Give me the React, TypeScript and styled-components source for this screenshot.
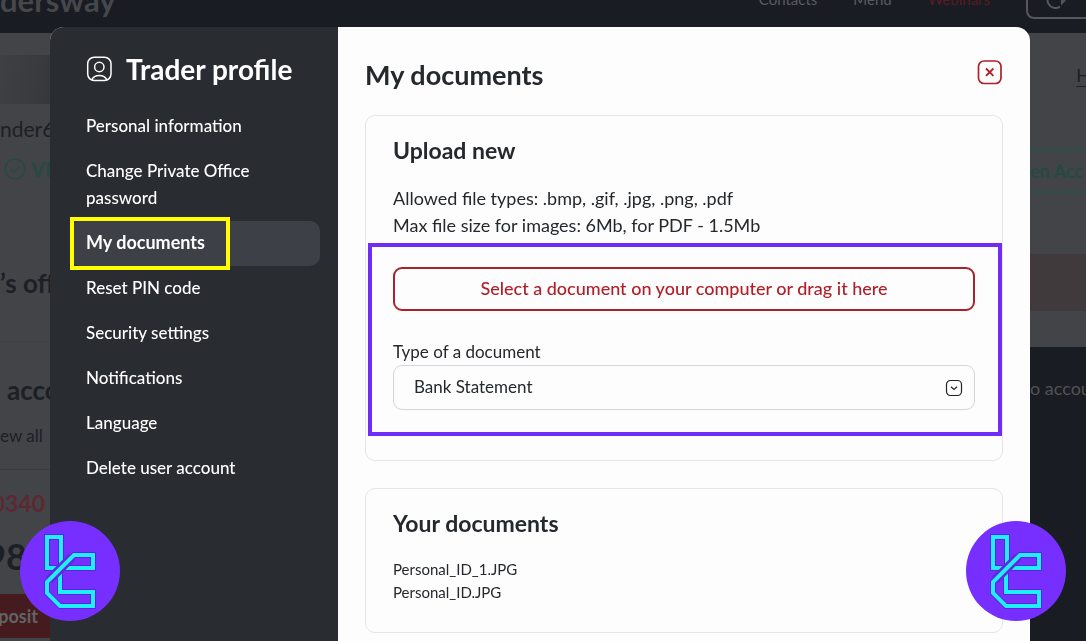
import React from "react";
import styled, { createGlobalStyle, css } from "styled-components";

const GlobalStyle = createGlobalStyle`
  *, *::before, *::after { box-sizing: border-box; }
  body { margin: 0; background: #191c22; overflow: hidden; }
  h1, h2, h3, p, ul { margin: 0; padding: 0; font-weight: 400; }
  ul { list-style: none; }
  body, button, select { font-family: Lato, "Liberation Sans", sans-serif; }
`;

/* Dimmed office page */

const Office = styled.div`
  height: 100vh;
  overflow: hidden;
  display: flex;
  flex-direction: column;
  color: #1c1f25;
  background: #424448;
`;

const TopBar = styled.header`
  flex: none;
  height: 66px;
  margin-top: -33px;
  display: flex;
  align-items: center;
  justify-content: space-between;
  background: #191c22;
`;

const Brand = styled.span`
  font-size: 31px;
  line-height: 36px;
  font-weight: 700;
  color: #45474b;
`;

const TopNav = styled.nav`
  display: flex;
  align-items: center;
  gap: 36px;
`;

const TopLink = styled.a<{ $accent?: boolean }>`
  padding-bottom: 2px;
  font-size: 15px;
  line-height: 20px;
  color: ${(p) => (p.$accent ? "#5a1a26" : "#5a5c60")};
  text-decoration: none;
`;

const SignOut = styled.button`
  width: 100px;
  height: 37px;
  margin-right: -40px;
  padding: 0 18px;
  display: flex;
  align-items: center;
  border: 2px solid #55575b;
  border-radius: 8px;
  color: #55575b;
  background: transparent;
`;

const Columns = styled.div`
  flex: 1;
  display: grid;
  grid-template-columns: 50px 56px;
  justify-content: space-between;
`;

const LeftColumn = styled.div`
  display: flex;
  flex-direction: column;
  white-space: nowrap;
  overflow: hidden;
`;

const Avatar = styled.div`
  flex: none;
  height: 49px;
  margin: 22px 0 12px;
  background: linear-gradient(100deg, #3e4044, #36383c);
`;

const UserName = styled.p`
  font-size: 21px;
  line-height: 26px;
`;

const Verified = styled.p`
  display: flex;
  align-items: center;
  gap: 5px;
  margin: 14px 0 0 4px;
  font-size: 20px;
  line-height: 26px;
  font-weight: 700;
  color: #254a3e;
  & > svg { flex: none; }
`;

const OfficeTitle = styled.h2`
  margin-top: 85px;
  font-size: 26px;
  line-height: 32px;
  font-weight: 700;
`;

const AccountTitle = styled.h2`
  margin-top: 42px;
  padding: 32px 0 15px 7px;
  border-top: 1px solid #3e4044;
  font-size: 26px;
  line-height: 32px;
  font-weight: 700;
`;

const ViewAll = styled.a`
  padding: 2px 0 20px;
  border-bottom: 1px solid #393b3f;
  font-size: 17px;
  line-height: 26px;
  color: inherit;
  text-decoration: none;
`;

const AccountNumber = styled.p`
  margin-top: 17px;
  display: flex;
  justify-content: flex-end;
  padding-right: 5px;
  font-size: 23px;
  line-height: 32px;
  font-weight: 700;
  color: #5c2933;
`;

const Balance = styled.p`
  margin-top: 17px;
  display: flex;
  justify-content: flex-end;
  padding-right: 23px;
  font-size: 36px;
  line-height: 40px;
  font-weight: 700;
`;

const Deposit = styled.button`
  flex: none;
  height: 44px;
  margin-top: 18px;
  padding: 0 12px 0 0;
  display: flex;
  align-items: center;
  justify-content: flex-end;
  border: 0;
  background: #451b1f;
  color: #626366;
  font-size: 18px;
  font-weight: 700;
`;

const RightColumn = styled.div`
  display: flex;
  flex-direction: column;
  white-space: nowrap;
  overflow: hidden;
`;

const HelpLink = styled.a`
  align-self: flex-end;
  margin: 28px -4px 0 0;
  font-size: 18px;
  line-height: 28px;
  color: #1c1f25;
  text-underline-offset: 4px;
`;

const OpenAccount = styled.button`
  flex: none;
  height: 44px;
  margin-top: 60px;
  padding: 0;
  text-align: left;
  border: solid #2a504b;
  border-width: 2px 0;
  background: transparent;
  color: #254a43;
  font-size: 18px;
  font-weight: 700;
`;

const Notice = styled.div`
  height: 57px;
  margin: 61px 0 36px;
  background: #403a3d;
`;

const Dark = styled.div`
  flex: 1;
  padding-top: 28px;
  background: #191c22;
  color: #505256;
  font-size: 18px;
  line-height: 27px;
`;

/* Profile dialog */

const DialogLayer = styled.div`
  position: fixed;
  inset: 0;
  padding: 27px 56px 0 50px;
  display: flex;
`;

const Dialog = styled.section`
  flex: 1;
  display: grid;
  grid-template-columns: 288px minmax(0, 1fr);
  border-radius: 14px 14px 0 0;
  overflow: hidden;
  background: #fdfdfd;
`;

const Sidebar = styled.aside`
  padding: 21px 18px 0 20px;
  background: #292c31;
  color: #fff;
`;

const SidebarTitle = styled.h1`
  display: flex;
  align-items: center;
  gap: 14px;
  padding-left: 16px;
  margin-bottom: 14px;
  font-size: 28px;
  line-height: 42px;
  font-weight: 700;
`;

const NavItem = styled.a<{ $active?: boolean }>`
  display: block;
  position: relative;
  padding: 8px 50px 10px 16px;
  border-radius: 10px;
  font-size: 17px;
  line-height: 27px;
  font-weight: 500;
  color: #fff;
  text-decoration: none;
  ${(p) =>
    p.$active &&
    css`
      background: #3d4046;
      font-size: 18px;
      font-weight: 700;
      &::after {
        content: "";
        position: absolute;
        inset: -4px auto -4px 0;
        width: 160px;
        border: 4px solid #ffff00;
      }
    `}
`;

const Content = styled.main`
  padding: 25px 27px 0;
  display: flex;
  flex-direction: column;
  color: #25282c;
`;

const ContentHeader = styled.header`
  height: 48px;
  margin-bottom: 15px;
  display: flex;
  align-items: center;
  justify-content: space-between;
`;

const ContentTitle = styled.h2`
  padding-bottom: 2px;
  font-size: 27px;
  line-height: 40px;
  font-weight: 700;
`;

const CloseButton = styled.button`
  height: 26px;
  padding: 0;
  margin-bottom: 8px;
  border: 0;
  background: transparent;
  color: #b01e28;
`;

const Card = styled.section`
  padding: 21px 27px 28px;
  border: 1px solid #e6e6e8;
  border-radius: 10px;
  & + & { margin-top: 27px; }
`;

const CardTitle = styled.h3`
  margin-bottom: 21px;
  font-size: 23px;
  line-height: 27px;
  font-weight: 700;
`;

const Hint = styled.p`
  font-size: 18px;
  line-height: 27px;
`;

const UploadForm = styled.form`
  position: relative;
  display: flex;
  flex-direction: column;
  margin: 28px 0 22px;
  &::after {
    content: "";
    position: absolute;
    inset: -24px -27px -26px -25px;
    border: 4px solid #6f2cf5;
    pointer-events: none;
  }
`;

const UploadButton = styled.button`
  height: 44px;
  padding: 0 0 3px;
  border: 2px solid #a8222a;
  border-radius: 9px;
  background: transparent;
  color: #b01e28;
  font-size: 18px;
  font-weight: 500;
`;

const FieldLabel = styled.label`
  margin-top: 27px;
  font-size: 17px;
  line-height: 27px;
`;

const SelectBox = styled.div`
  display: grid;
  align-items: center;
  & > * { grid-area: 1 / 1; }
  & > svg {
    justify-self: end;
    margin-right: 12px;
    pointer-events: none;
  }
`;

const Select = styled.select`
  width: 100%;
  height: 45px;
  padding: 0 20px 2px;
  appearance: none;
  border: 1px solid #d4d5d8;
  border-radius: 9px;
  background: transparent;
  color: #25282c;
  font-size: 17px;
`;

const FileName = styled.li`
  font-size: 15px;
  line-height: 23px;
`;

const Badge = styled.div<{ $side: "left" | "right" }>`
  position: fixed;
  bottom: 20px;
  ${(p) => p.$side}: 20px;
  width: 100px;
  height: 100px;
  border-radius: 50%;
  background: #772fff;
`;

const ProfileIcon = () => (
  <svg width="26" height="26" viewBox="0 0 26 26" fill="none" stroke="currentColor" strokeWidth="1.5" aria-hidden="true">
    <rect x="1.7" y="1.2" width="23.300" height="23.300" rx="6.500" />
    <circle cx="13.300" cy="11" r="4.700" />
    <path d="M5.800 24c1.200-3 4.100-4.500 7.500-4.500s6.300 1.500 7.500 4.500" />
  </svg>
);

const CloseIcon = () => (
  <svg width="26" height="26" viewBox="0 0 26 26" fill="none" stroke="currentColor" aria-hidden="true">
    <rect x="1.500" y="2" width="22.500" height="22.500" rx="5.500" strokeWidth="1.700" />
    <path d="M9 9.500l7.400 7.400M16.400 9.500l-7.400 7.400" strokeWidth="1.800" />
  </svg>
);

const ChevronBox = () => (
  <svg width="18" height="18" viewBox="0 0 18 18" fill="none" stroke="#222428" aria-hidden="true">
    <rect x="1.500" y="1.500" width="15" height="15" rx="4" strokeWidth="1.200" />
    <path d="M6 7.700l3 2.800 3-2.800" strokeWidth="1.200" />
  </svg>
);

const CheckCircle = () => (
  <svg width="22" height="22" viewBox="0 0 22 22" fill="none" stroke="currentColor" strokeWidth="1.500" aria-hidden="true">
    <circle cx="11" cy="11" r="9.800" />
    <path d="M6.500 11.200l3.200 3.200 5.800-6" />
  </svg>
);

const PowerIcon = () => (
  <svg width="20" height="20" viewBox="0 0 20 20" fill="none" stroke="currentColor" strokeWidth="2" aria-hidden="true">
    <path d="M6 2.800a8 8 0 1 0 8 13.800M16 8v5l3-3" />
  </svg>
);

const Logo = ({ side }: { side: "left" | "right" }) => (
  <Badge $side={side}>
    <svg width="100" height="100" viewBox="0 0 100 100" fill="none" aria-hidden="true">
      <path d="M39 47H27V16h14v29M42 47h31V34H54L27 61v11l13 13h33V71H40V48" stroke="#5b25d8" strokeWidth="6" />
      <path d="M39 47H27V16h14v29M42 47h31V34M73 85V71H40V48" stroke="#1feeff" strokeWidth="4" />
      <path d="M52 36L29 59" stroke="#6026dd" strokeWidth="9" />
      <path d="M73 49V34H54L27 61v11l13 13h33v-3" stroke="#1feeff" strokeWidth="4" />
    </svg>
  </Badge>
);

const items = [
  "Personal information",
  "Change Private Office password",
  "My documents",
  "Reset PIN code",
  "Security settings",
  "Notifications",
  "Language",
  "Delete user account",
];

export default function App() {
  return (
    <>
      <GlobalStyle />
      <Office>
        <TopBar>
          <Brand>dersway</Brand>
          <TopNav>
            <TopLink href="#contacts">Contacts</TopLink>
            <TopLink href="#menu">Menu</TopLink>
            <TopLink href="#webinars" $accent>Webinars</TopLink>
            <SignOut aria-label="Sign out"><PowerIcon /></SignOut>
          </TopNav>
        </TopBar>
        <Columns>
          <LeftColumn>
            <Avatar />
            <UserName>nder6</UserName>
            <Verified><CheckCircle />VE</Verified>
            <OfficeTitle>’s off</OfficeTitle>
            <AccountTitle>acco</AccountTitle>
            <ViewAll href="#accounts">ew all</ViewAll>
            <AccountNumber>0340</AccountNumber>
            <Balance>98</Balance>
            <Deposit>posit</Deposit>
          </LeftColumn>
          <RightColumn>
            <HelpLink href="#help">H</HelpLink>
            <OpenAccount>en Acc</OpenAccount>
            <Notice />
            <Dark>o accou</Dark>
          </RightColumn>
        </Columns>
      </Office>

      <DialogLayer>
        <Dialog role="dialog" aria-label="Trader profile">
          <Sidebar>
            <SidebarTitle><ProfileIcon />Trader profile</SidebarTitle>
            <nav>
              {items.map((label) => (
                <NavItem key={label} href="#profile" $active={label === "My documents"}>
                  {label}
                </NavItem>
              ))}
            </nav>
          </Sidebar>
          <Content>
            <ContentHeader>
              <ContentTitle>My documents</ContentTitle>
              <CloseButton type="button" aria-label="Close"><CloseIcon /></CloseButton>
            </ContentHeader>
            <Card>
              <CardTitle>Upload new</CardTitle>
              <Hint>Allowed file types: .bmp, .gif, .jpg, .png, .pdf</Hint>
              <Hint>Max file size for images: 6Mb, for PDF - 1.5Mb</Hint>
              <UploadForm>
                <UploadButton type="button">Select a document on your computer or drag it here</UploadButton>
                <FieldLabel htmlFor="document-type">Type of a document</FieldLabel>
                <SelectBox>
                  <Select id="document-type" defaultValue="bank">
                    <option value="bank">Bank Statement</option>
                  </Select>
                  <ChevronBox />
                </SelectBox>
              </UploadForm>
            </Card>
            <Card>
              <CardTitle>Your documents</CardTitle>
              <ul>
                <FileName>Personal_ID_1.JPG</FileName>
                <FileName>Personal_ID.JPG</FileName>
              </ul>
            </Card>
          </Content>
        </Dialog>
      </DialogLayer>
      <Logo side="left" />
      <Logo side="right" />
    </>
  );
}
